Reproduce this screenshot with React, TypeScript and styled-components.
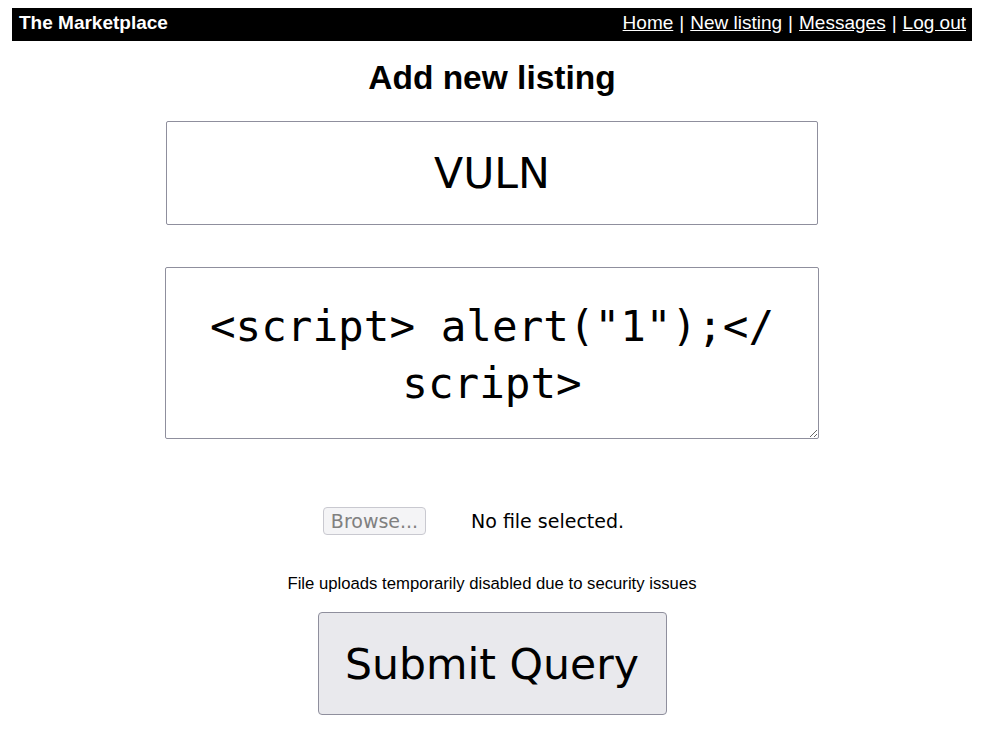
import styled, { createGlobalStyle } from "styled-components";

const GlobalStyle = createGlobalStyle`
  body {
    margin: 8px 28px 0 12px;
    background: #ffffff;
    color: #000000;
    font-family: "Liberation Sans", Arial, sans-serif;
  }
`;

const NavBar = styled.div`
  display: flex;
  justify-content: space-between;
  align-items: flex-start;
  height: 33px;
  box-sizing: border-box;
  padding: 4px 6px 0 7px;
  background: #000000;
  color: #ffffff;
  font-size: 19px;
`;

const Brand = styled.span`
  font-weight: bold;
`;

const NavLinks = styled.div`
  display: flex;
  gap: 6px;
`;

const NavLink = styled.a`
  color: #ffffff;
  text-decoration: underline;
  cursor: pointer;
`;

const Form = styled.form`
  display: flex;
  flex-direction: column;
  align-items: center;
`;

const Title = styled.h2`
  margin: 17px 0 0;
  font-size: 33.5px;
  line-height: 40px;
  font-weight: bold;
`;

const TitleInput = styled.input`
  margin-top: 23px;
  width: 652px;
  height: 104px;
  box-sizing: border-box;
  border: 1px solid #8f8f9d;
  border-radius: 2px;
  padding: 0 8px;
  background: #ffffff;
  color: #000000;
  text-align: center;
  font-family: "DejaVu Sans", sans-serif;
  font-size: 42.6px;
  outline: none;
`;

// break-all so the first line ends after "</" like the reference
const Description = styled.textarea`
  margin-top: 42px;
  width: 654px;
  height: 172px;
  box-sizing: border-box;
  border: 1px solid #8f8f9d;
  border-radius: 2px;
  padding: 30px 38px 0;
  background: #ffffff;
  color: #000000;
  text-align: center;
  font-family: "DejaVu Sans Mono", monospace;
  font-size: 42.6px;
  line-height: 57px;
  word-break: break-all;
  resize: both;
  outline: none;
`;

const FileField = styled.div`
  margin-top: 68px;
  width: 338px;
  height: 28px;
  display: flex;
  align-items: center;
  gap: 45px;
  font-family: "DejaVu Sans", sans-serif;
  font-size: 19px;
`;

const BrowseButton = styled.button`
  width: 103px;
  height: 28px;
  box-sizing: border-box;
  padding: 0;
  border: 1px solid #c9c9d0;
  border-radius: 4px;
  background: #f4f4f6;
  color: #808080;
  font-family: "DejaVu Sans", sans-serif;
  font-size: 19px;
`;

const FileLabel = styled.span`
  color: #000000;
  white-space: nowrap;
`;

const Notice = styled.p`
  margin: 39px 0 0;
  font-size: 16.7px;
  line-height: 19px;
`;

const SubmitButton = styled.button`
  margin-top: 19px;
  width: 349px;
  height: 103px;
  box-sizing: border-box;
  border: 1px solid #8f8f9d;
  border-radius: 4px;
  background: #e9e9ed;
  color: #000000;
  font-family: "DejaVu Sans", sans-serif;
  font-size: 42.6px;
  padding: 0;
  cursor: pointer;
`;

export default function App() {
  return (
    <>
      <GlobalStyle />
      <NavBar>
        <Brand>The Marketplace</Brand>
        <NavLinks>
          <NavLink>Home</NavLink>|<NavLink>New listing</NavLink>|
          <NavLink>Messages</NavLink>|<NavLink>Log out</NavLink>
        </NavLinks>
      </NavBar>
      <Form onSubmit={(e) => e.preventDefault()}>
        <Title>Add new listing</Title>
        <TitleInput type="text" defaultValue="VULN" />
        <Description defaultValue={'<script> alert("1");</script>'} />
        <FileField>
          <BrowseButton type="button" disabled>
            Browse...
          </BrowseButton>
          <FileLabel>No file selected.</FileLabel>
        </FileField>
        <Notice>File uploads temporarily disabled due to security issues</Notice>
        <SubmitButton type="submit">Submit Query</SubmitButton>
      </Form>
    </>
  );
}
